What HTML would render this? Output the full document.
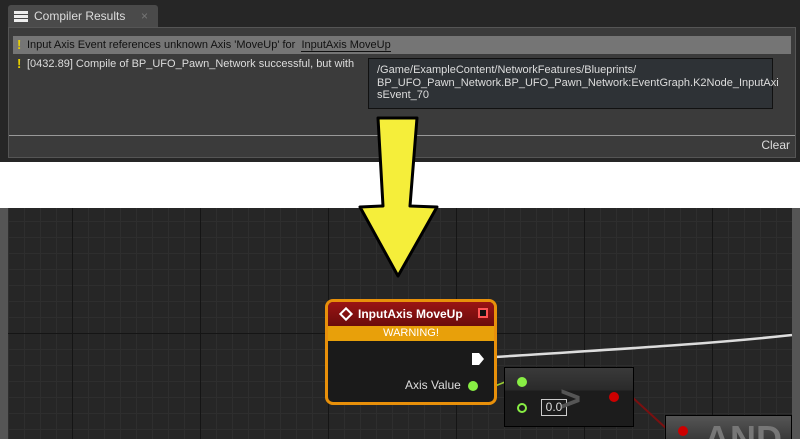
<!DOCTYPE html>
<html><head><meta charset="utf-8"><style>
*{margin:0;padding:0;box-sizing:border-box}
html,body{width:800px;height:439px;overflow:hidden}
body{background:#fff;font-family:"Liberation Sans",sans-serif;position:relative}
.top{position:absolute;left:0;top:0;width:800px;height:162px;background:#262626}
.tab{position:absolute;left:8px;top:5px;width:150px;height:24px;background:#4a4a4a;border-radius:3px 3px 0 0;color:#ddd;font-size:12px;line-height:22px;padding-left:26px}
.panel{position:absolute;left:8px;top:27px;width:788px;height:131px;background:#3b3b3b;border:1px solid #555}
.row{position:absolute;left:4px;width:778px;height:18px;font-size:11px;line-height:18px;color:#ddd;padding-left:14px;white-space:nowrap}
.ex{position:absolute;left:4px;top:2px;width:3px;height:14px;color:#e8d000;font-weight:bold;font-size:13px;line-height:14px}
.tip{position:absolute;left:368px;top:58px;width:405px;height:51px;background:#2e3236;border:1px solid #111;color:#ddd;font-size:11px;line-height:12.5px;padding:5px 8px}
.graph{position:absolute;left:0;top:208px;width:800px;height:231px;background-color:#262626;
background-image:linear-gradient(90deg,#151515 1px,transparent 1px),linear-gradient(#151515 1px,transparent 1px),linear-gradient(90deg,#2e2e2e 1px,transparent 1px),linear-gradient(#2e2e2e 1px,transparent 1px);
background-size:128px 128px,128px 128px,16px 16px,16px 16px;background-position:72px -3px,72px -3px,8px 13px,8px 13px}
</style></head><body>
<div class="top">
<div class="tab"><span style="position:absolute;left:6px;top:6px;width:14px;height:11px;border-top:3px solid #eee;border-bottom:3px solid #eee"></span><span style="position:absolute;left:6px;top:10px;width:14px;height:3px;background:#eee"></span>Compiler Results<span style="position:absolute;left:133px;color:#777">×</span></div>
<div class="panel">
<div class="row" style="top:8px;background:#757575;color:#111"><span class="ex">!</span>Input Axis Event references unknown Axis 'MoveUp' for &nbsp;<span style="border-bottom:1px solid #111">InputAxis MoveUp</span></div>
<div class="row" style="top:27px"><span class="ex">!</span>[0432.89] Compile of BP_UFO_Pawn_Network successful, but with</div>
<div style="position:absolute;left:0;top:107px;width:786px;height:1px;background:#999"></div>
<div style="position:absolute;right:5px;top:110px;color:#ddd;font-size:12px">Clear</div>
</div>
<div class="tip">/Game/ExampleContent/NetworkFeatures/Blueprints/<br>BP_UFO_Pawn_Network.BP_UFO_Pawn_Network:EventGraph.K2Node_InputAxi<br>sEvent_70</div>
</div>
<div class="graph">
<div style="position:absolute;left:0;top:0;width:8px;height:231px;background:#555"></div>
<div style="position:absolute;right:0;top:0;width:8px;height:231px;background:#555"></div>
</div>
<svg style="position:absolute;left:0;top:0" width="800" height="439">
<path d="M495 357 C600 350 700 345 792 335" stroke="#ddd" stroke-width="2.5" fill="none"/>
<path d="M495 386 L505 382" stroke="#9c3" stroke-width="1.5"/>
<path d="M632 397 L668 430" stroke="#7a1010" stroke-width="2"/>
<path d="M378 118 L417 118 L410 206 L437 207 L398 276 L360 207 L383 206 Z" fill="#f5ee3a" stroke="#000" stroke-width="3" stroke-linejoin="round"/>
</svg>
<div style="position:absolute;left:325px;top:299px;width:172px;height:106px;border:3px solid #e8900a;border-radius:8px;background:#1a1a1a;overflow:hidden">
<div style="height:24px;background:linear-gradient(#9a1414,#6a0c0c);color:#fff;font-weight:bold;font-size:12px;line-height:24px;padding-left:30px;position:relative">
<span style="position:absolute;left:13px;top:7px;width:10px;height:10px;border:2px solid #fff;transform:rotate(45deg)"></span>InputAxis MoveUp
<span style="position:absolute;right:6px;top:6px;width:10px;height:10px;border:2px solid #f55;background:#111"></span></div>
<div style="height:15px;background:#e8a00a;color:#fff;font-size:11px;text-align:center;line-height:15px">WARNING!</div>
<svg style="position:absolute;left:143px;top:50px" width="14" height="14"><path d="M1 1H8L13 7L8 13H1Z" fill="#fff"/></svg>
<div style="position:absolute;left:77px;top:76px;color:#ddd;font-size:12px">Axis Value</div>
<div style="position:absolute;left:140px;top:79px;width:10px;height:10px;border-radius:5px;background:#8e4"></div>
</div>
<div style="position:absolute;left:504px;top:367px;width:130px;height:60px;background:linear-gradient(#3a3a3a 0,#2a2a2a 22px,#1c1c1c 23px);border:1px solid #000">
<div style="position:absolute;left:12px;top:9px;width:10px;height:10px;border-radius:5px;background:#8e4"></div>
<div style="position:absolute;left:12px;top:35px;width:10px;height:10px;border-radius:5px;border:2px solid #8e4"></div>
<div style="position:absolute;left:36px;top:31px;width:26px;height:17px;border:1px solid #ccc;color:#ddd;font-size:12px;line-height:15px;text-align:center">0.0</div>
<div style="position:absolute;left:55px;top:10px;color:#555;font-size:36px;font-weight:bold">&gt;</div>
<div style="position:absolute;left:104px;top:24px;width:10px;height:10px;border-radius:5px;background:#c00"></div>
</div>
<div style="position:absolute;left:665px;top:415px;width:127px;height:24px;background:linear-gradient(#555,#3a3a3a);border:1px solid #000;border-bottom:none;overflow:hidden">
<div style="position:absolute;left:12px;top:10px;width:10px;height:10px;border-radius:5px;background:#c00"></div>
<div style="position:absolute;left:38px;top:2px;color:#777;font-size:36px;font-weight:bold">AND</div>
</div>
</body></html>
